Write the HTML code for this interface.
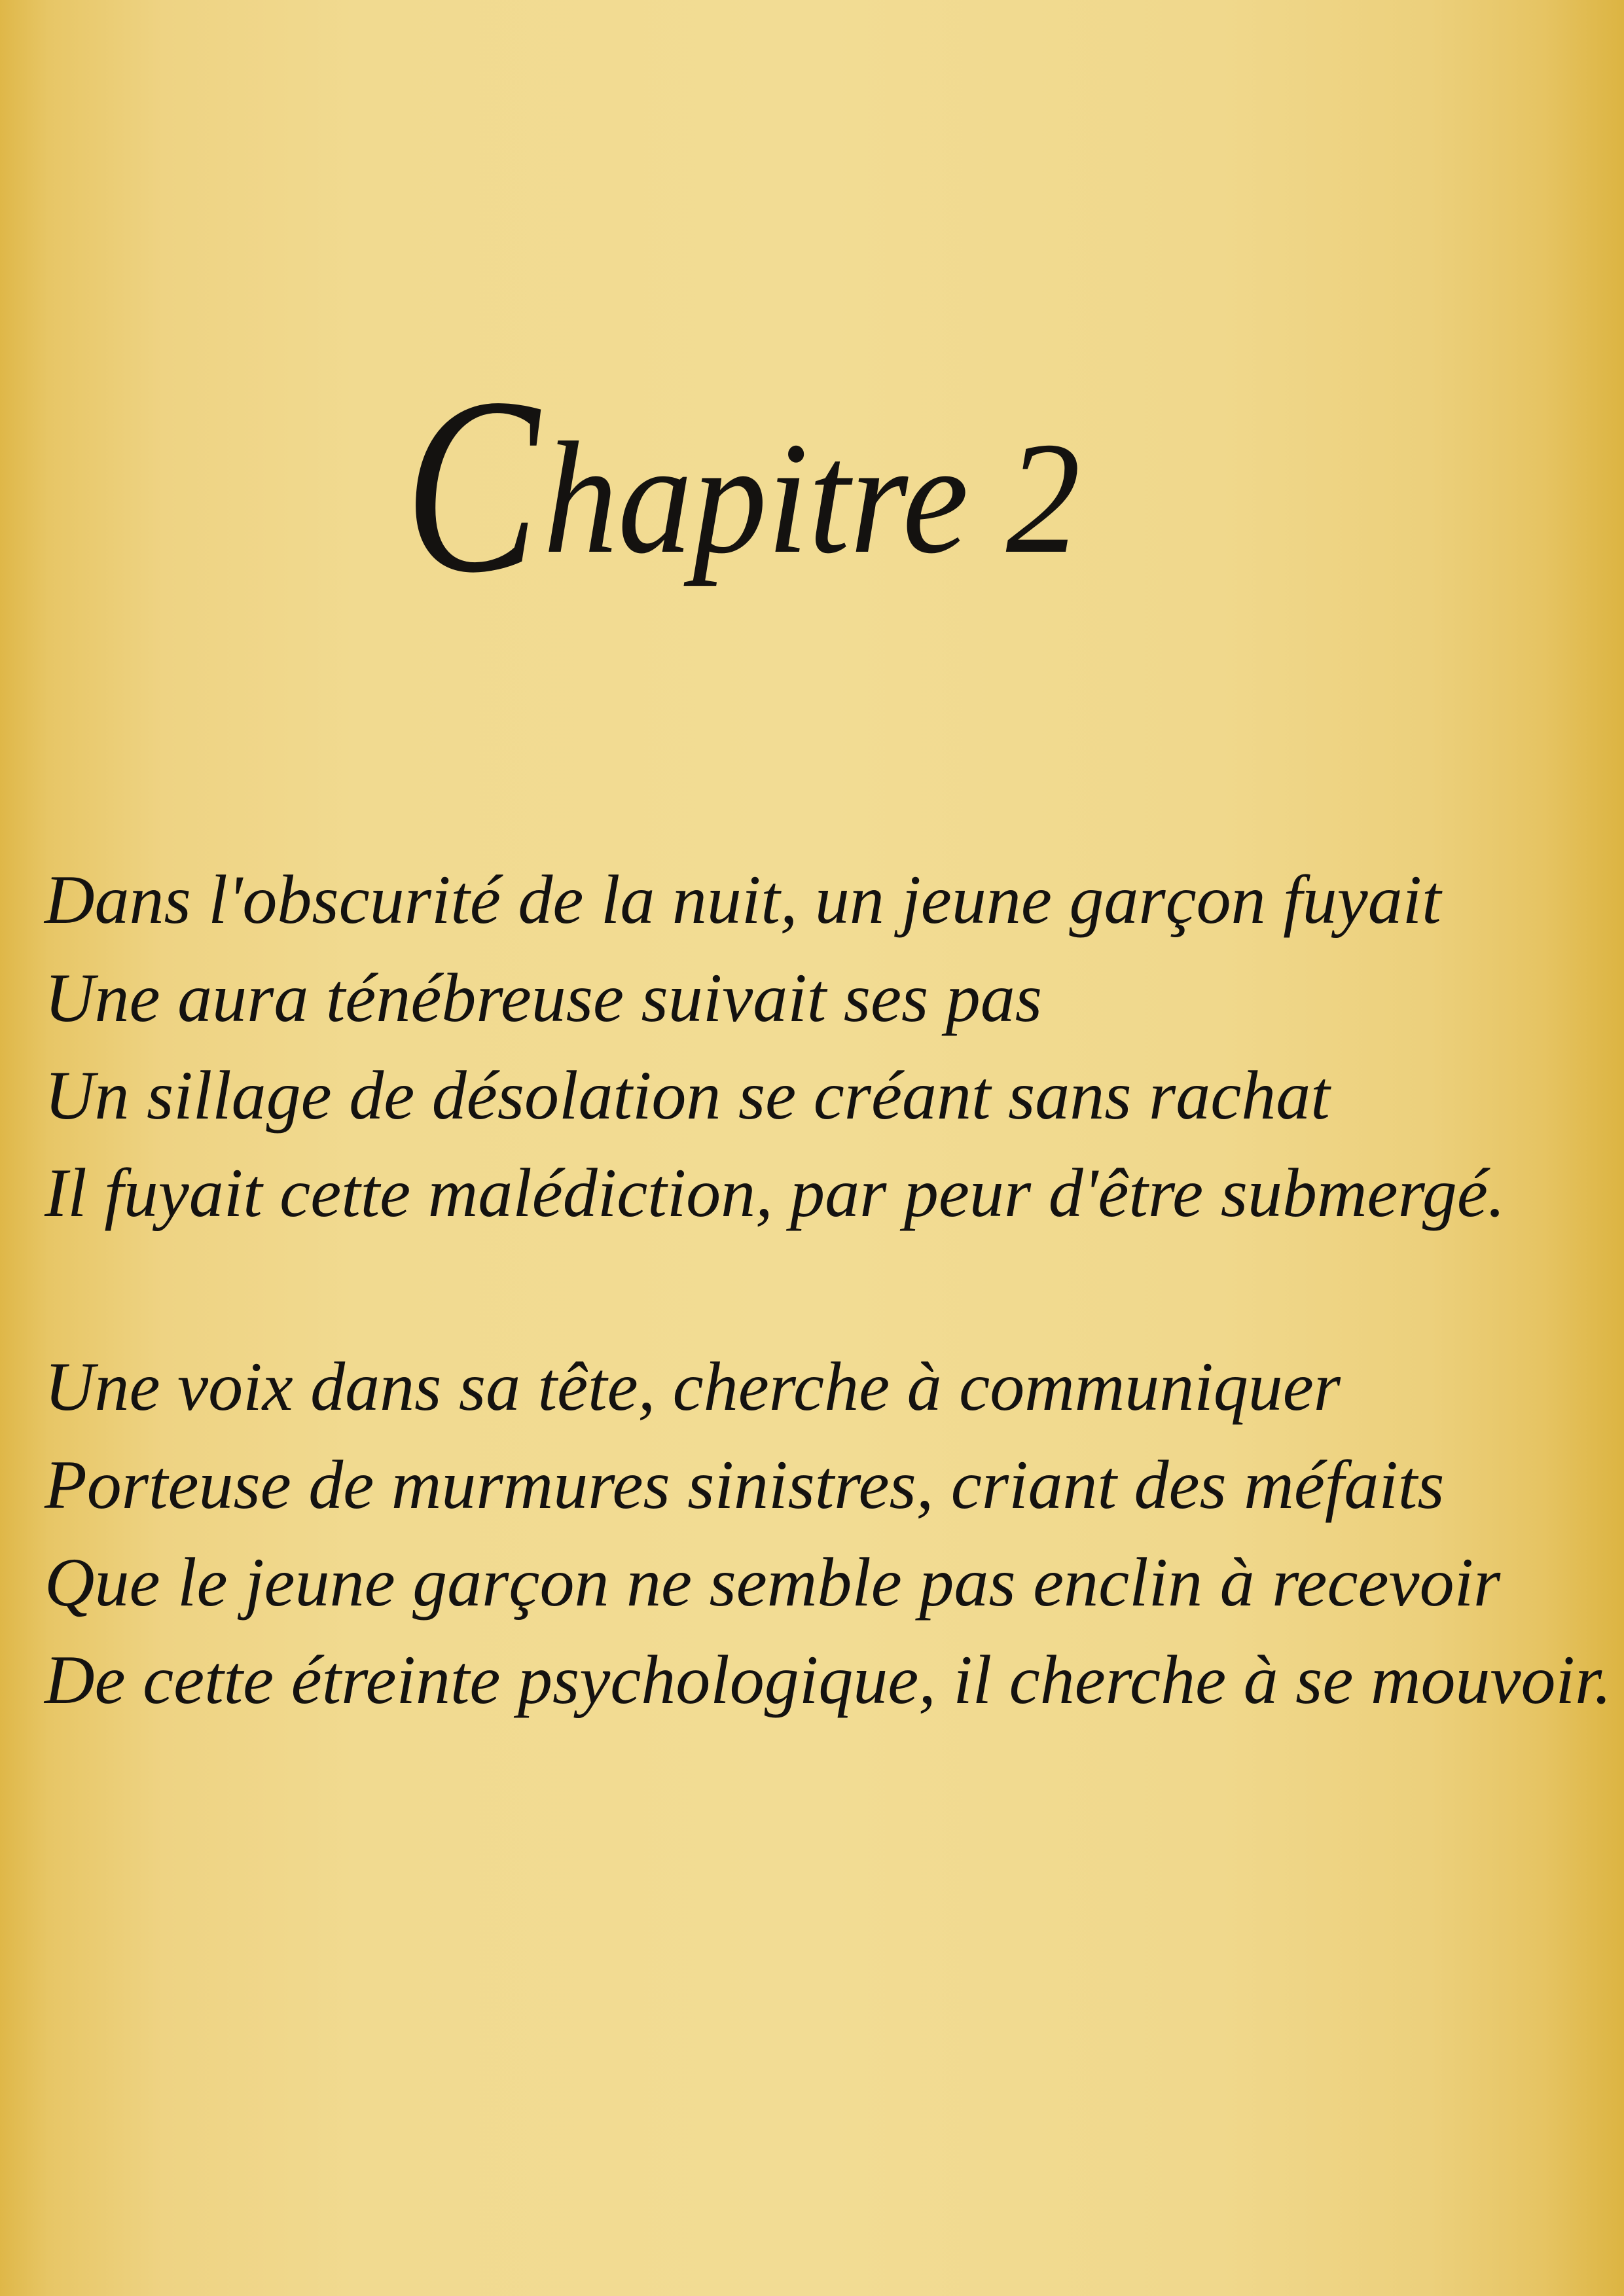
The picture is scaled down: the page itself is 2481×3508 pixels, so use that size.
<!DOCTYPE html>
<html><head><meta charset="utf-8"><style>
html,body{margin:0;padding:0}
body{width:2481px;height:3508px;position:relative;overflow:hidden;
background:linear-gradient(to right,#dfb748 0%,#e7c666 3%,#eed383 10%,#f1da90 22%,#f2dc94 50%,#f0d88c 75%,#ecd07c 88%,#e6c463 95%,#dcb442 100%);
font-family:"Liberation Serif",serif;font-style:italic;color:#141210}
.t{position:absolute;line-height:1;white-space:nowrap}
.l{position:absolute;left:68px;font-size:106px;line-height:1;white-space:nowrap}
</style></head><body>
<div class="t" style="left:618px;top:550px;font-size:385px;transform:scaleX(0.8);transform-origin:left">C</div>
<div class="t" style="left:830px;top:638px;font-size:245px;transform:scaleX(0.93);transform-origin:left">hapitre 2</div>
<div class="l" style="top:1322px">Dans l'obscurité de la nuit, un jeune garçon fuyait</div>
<div class="l" style="top:1472px">Une aura ténébreuse suivait ses pas</div>
<div class="l" style="top:1621px">Un sillage de désolation se créant sans rachat</div>
<div class="l" style="top:1770px">Il fuyait cette malédiction, par peur d'être submergé.</div>
<div class="l" style="top:2066px">Une voix dans sa tête, cherche à communiquer</div>
<div class="l" style="top:2216px">Porteuse de murmures sinistres, criant des méfaits</div>
<div class="l" style="top:2365px">Que le jeune garçon ne semble pas enclin à recevoir</div>
<div class="l" style="top:2514px">De cette étreinte psychologique, il cherche à se mouvoir.</div>
</body></html>
